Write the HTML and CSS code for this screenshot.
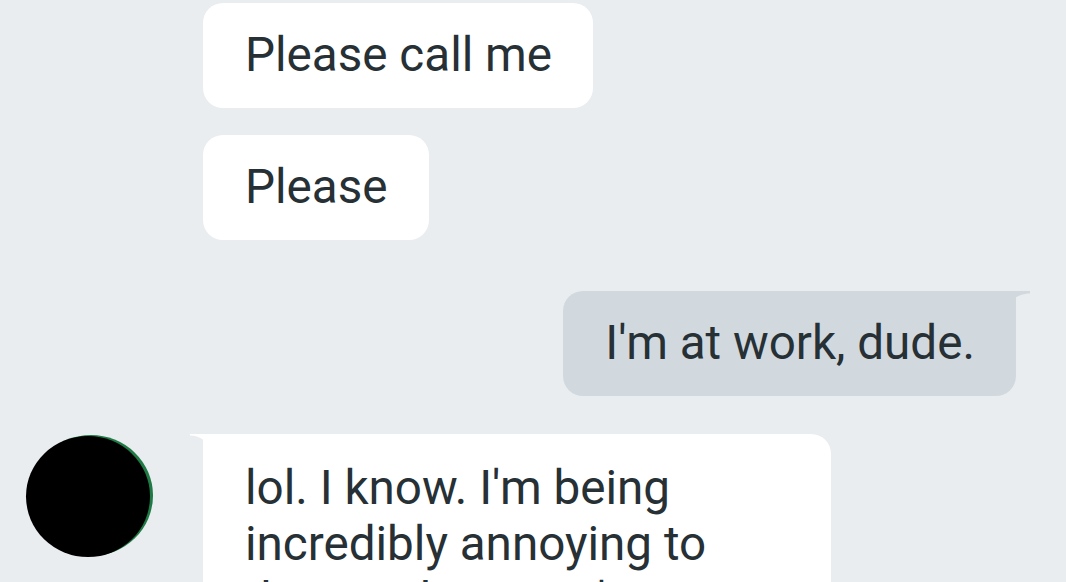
FILE: index.html
```html
<!DOCTYPE html>
<html>
<head>
<meta charset="utf-8">
<link rel="stylesheet" href="styles.css">
</head>
<body>
<div class="chat">
  <div class="row in first">
    <div class="bubble">Please call me</div>
  </div>
  <div class="row in second">
    <div class="bubble">Please</div>
  </div>
  <div class="row out">
    <div class="bubble sent">I'm at work, dude.<span class="tail-r"></span></div>
  </div>
  <div class="row in last">
    <div class="avatar"></div>
    <div class="bubble multi">lol. I know. I'm being incredibly annoying to them right now. I'm sorry</div>
  </div>
</div>
</body>
</html>
```
FILE: styles.css
```css
html, body {
  margin: 0;
  padding: 0;
  background: #e9edf0;
  height: 582px;
  overflow: hidden;
}
.chat {
  display: flex;
  flex-direction: column;
  padding-top: 3px;
  font-family: Roboto, "Liberation Sans", sans-serif;
  color: #263035;
}
.row {
  display: flex;
}
.row.in {
  padding-left: 203px;
}
.row.second {
  margin-top: 27px;
}
.row.out {
  justify-content: flex-end;
  padding-right: 50px;
  margin-top: 51px;
}
.row.last {
  margin-top: 38px;
  padding-left: 26px;
  gap: 53px;
  align-items: flex-start;
}
.bubble {
  position: relative;
  background: #ffffff;
  border-radius: 20px;
  font-size: 47.6px;
  line-height: 57px;
  padding: 24px 41px 24px 42px;
  white-space: nowrap;
}
.bubble.sent {
  background: #d1d9df;
  border-top-right-radius: 0;
}
.tail-r {
  position: absolute;
  top: 0;
  right: -14px;
  width: 14px;
  height: 30px;
  background: #d1d9df;
  -webkit-mask: radial-gradient(circle at 100% 100%, transparent 27px, #000 28px);
  mask: radial-gradient(circle at 100% 100%, transparent 27px, #000 28px);
}
.bubble.multi {
  width: 545px;
  white-space: normal;
  line-height: 56px;
  padding: 26px 41px 24px 42px;
  border-top-left-radius: 0;
}
.bubble.multi::before {
  content: "";
  position: absolute;
  top: 0;
  left: -13px;
  width: 13px;
  height: 24px;
  background: #ffffff;
  -webkit-mask: radial-gradient(circle at 0 100%, transparent 22px, #000 23px);
  mask: radial-gradient(circle at 0 100%, transparent 22px, #000 23px);
}
.avatar {
  width: 124px;
  height: 121px;
  margin-top: 2px;
  border-radius: 50%;
  background: #000;
  box-shadow: 3px -1px 0 0 #1f7a45;
  flex: none;
}
```
